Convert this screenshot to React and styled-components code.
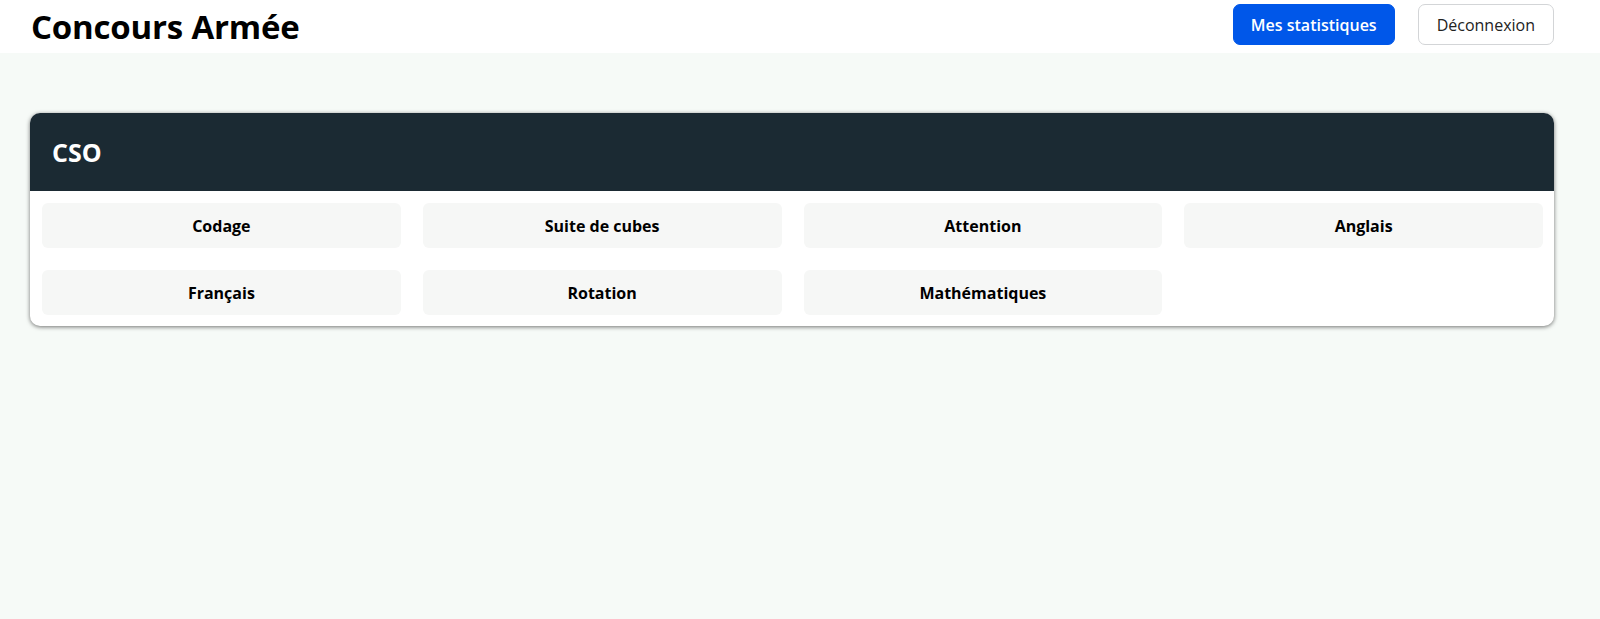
import React from "react";
import styled, { createGlobalStyle } from "styled-components";

const Global = createGlobalStyle`
  html, body { margin: 0; padding: 0; }
  body {
    background: #f6faf7;
    font-family: "Open Sans", "Noto Sans", sans-serif;
    color: #000;
  }
`;

const Page = styled.div`
  min-height: 619px;
  background: #f6faf7;
`;

const TopBar = styled.header`
  height: 53px;
  background: #fff;
  display: flex;
  align-items: center;
  justify-content: space-between;
  padding: 0 46px 0 31px;
  box-sizing: border-box;
`;

const Title = styled.h1`
  margin: 0;
  font-size: 33px;
  font-weight: 700;
  letter-spacing: -0.2px;
  line-height: 1;
  margin-top: -1px;
`;

const Actions = styled.div`
  display: flex;
  align-items: center;
  gap: 23px;
  margin-top: -4px;
`;

const Button = styled.button`
  height: 41px;
  padding: 0 ${(p) => (p.$primary ? "17px" : "18px")};
  border-radius: 7px;
  font-family: inherit;
  font-size: 16px;
  font-weight: ${(p) => (p.$primary ? 600 : 500)};
  cursor: pointer;
  background: ${(p) => (p.$primary ? "#0057e9" : "#fff")};
  color: ${(p) => (p.$primary ? "#fff" : "#222")};
  border: 1px solid ${(p) => (p.$primary ? "#0057e9" : "#d3d5d7")};
`;

const Main = styled.main`
  padding: 60px 46px 0 30px;
`;

const Card = styled.section`
  background: #fff;
  border-radius: 10px;
  overflow: hidden;
  box-shadow: 0 1px 4px rgba(0, 0, 0, 0.55);
`;

const CardHeader = styled.div`
  height: 78px;
  background: #1b2a33;
  display: flex;
  align-items: center;
  padding: 0 22px;
`;

const CardTitle = styled.h2`
  margin: 0;
  color: #fff;
  font-size: 25px;
  font-weight: 700;
`;

const Grid = styled.div`
  display: grid;
  grid-template-columns: repeat(4, 1fr);
  gap: 22px;
  padding: 12px 11px 11px 12px;
`;

const Subject = styled.button`
  height: 45px;
  border: none;
  border-radius: 6px;
  background: #f6f7f6;
  font-family: inherit;
  font-size: 16px;
  font-weight: 700;
  color: #000;
  cursor: pointer;
`;

const subjects = [
  "Codage",
  "Suite de cubes",
  "Attention",
  "Anglais",
  "Français",
  "Rotation",
  "Mathématiques",
];

export default function App() {
  return (
    <Page>
      <Global />
      <TopBar>
        <Title>Concours Armée</Title>
        <Actions>
          <Button $primary>Mes statistiques</Button>
          <Button>Déconnexion</Button>
        </Actions>
      </TopBar>
      <Main>
        <Card>
          <CardHeader>
            <CardTitle>CSO</CardTitle>
          </CardHeader>
          <Grid>
            {subjects.map((s) => (
              <Subject key={s}>{s}</Subject>
            ))}
          </Grid>
        </Card>
      </Main>
    </Page>
  );
}
